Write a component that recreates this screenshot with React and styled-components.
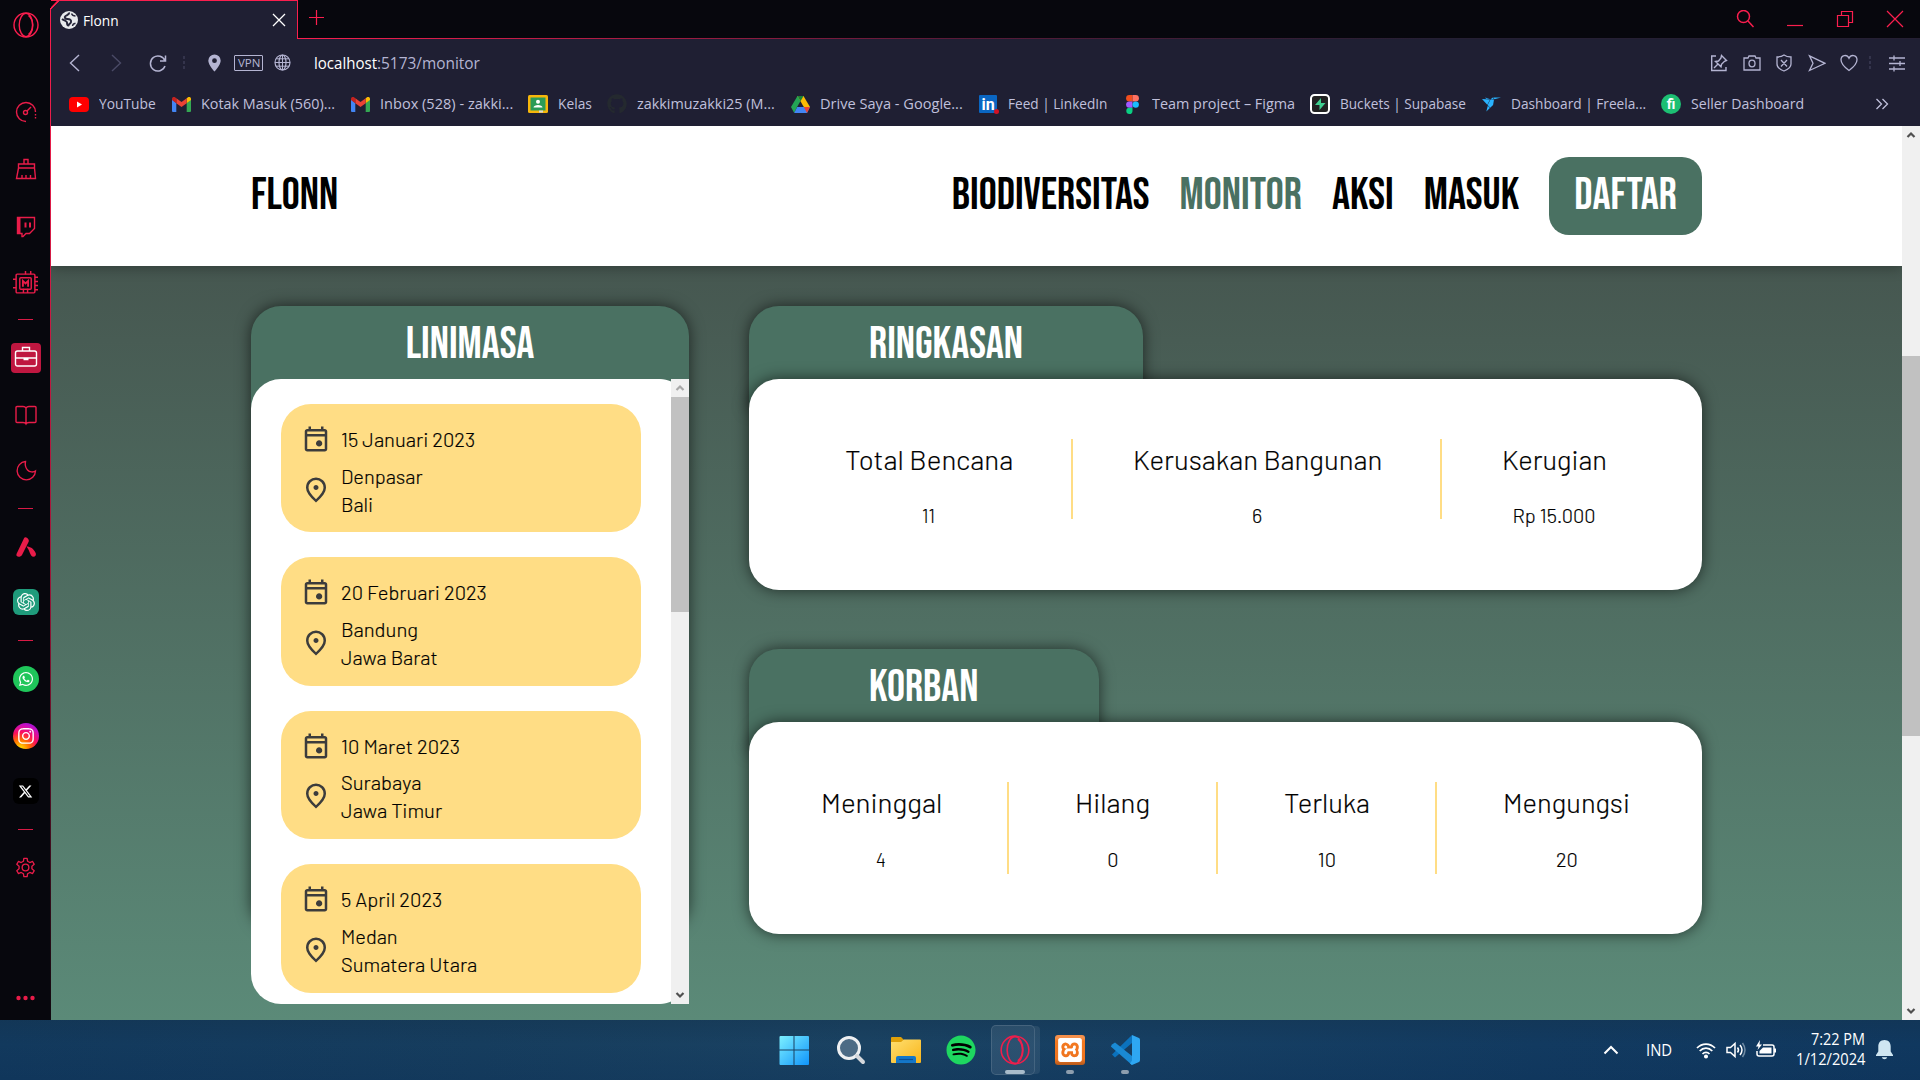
import React, { useLayoutEffect, useRef, useState } from "react";
import styled, { createGlobalStyle } from "styled-components";
import { FaWhatsapp, FaInstagram, FaXTwitter, FaGithub, FaSpotify } from "react-icons/fa6";
import { SiOpenai, SiXampp, SiFreelancer } from "react-icons/si";

const accent = "#fa1e4e";
const chrome = "#1f1f33";
const green = "#4a7162";
const ui = `"Segoe UI", "Open Sans", "Noto Sans", sans-serif`;
const display = `"Bebas Neue", Roboto, sans-serif`;
const body = `Barlow, Roboto, sans-serif`;

const Global = createGlobalStyle`
  * { box-sizing: border-box; }
  body { margin: 0; overflow: hidden; background: #07070d; }
  svg { display: block; flex: none; }
`;

/* Text condensed or widened to a set measure */
const Measure = styled.span`
  display: inline-block;
  flex: none;
  width: ${(p) => p.$w}px;
  white-space: nowrap;
  text-align: left;
`;
const Glyphs = styled.span`
  display: inline-block;
  transform-origin: 0 50%;
`;
function Fit({ w, children }) {
  const ref = useRef(null);
  const [scale, setScale] = useState(1);
  useLayoutEffect(() => {
    setScale(w / ref.current.offsetWidth);
  }, [w]);
  return (
    <Measure $w={w}>
      <Glyphs ref={ref} style={{ transform: `scaleX(${scale})` }}>{children}</Glyphs>
    </Measure>
  );
}

const Desktop = styled.div`
  width: 1920px;
  height: 1080px;
  display: flex;
  flex-direction: column;
  overflow: hidden;
  font-family: ${ui};
`;
const Browser = styled.div`
  height: 1020px;
  display: flex;
  background: #07070d;
`;

/* ---------- sidebar ---------- */
const Side = styled.aside`
  width: 50px;
  flex: none;
  display: flex;
  flex-direction: column;
  padding-left: 1px;
`;
const Edge = styled.div`
  width: 1px;
  flex: none;
  margin-top: 8px;
  background: linear-gradient(${accent}, #a3173a 55%, #4a0f22 80%, #10080f);
`;
const Slot = styled.div`
  height: ${(p) => p.$h || 24}px;
  margin-top: ${(p) => p.$mt}px;
  flex: none;
  display: flex;
  align-items: center;
  justify-content: center;
  color: #e81c49;
`;
const Rule = styled.div`
  width: 15px;
  height: 1px;
  background: #d81a45;
`;
const Badge = styled.div`
  width: ${(p) => p.$s || 26}px;
  height: ${(p) => p.$s || 26}px;
  border-radius: ${(p) => p.$r || "50%"};
  background: ${(p) => p.$bg};
  color: ${(p) => p.$c || "#fff"};
  display: flex;
  align-items: center;
  justify-content: center;
`;

const Line = ({ s = 24, children, w = 1.4, color = "currentColor", vb = 24 }) => (
  <svg width={s} height={s} viewBox={`0 0 ${vb} ${vb}`} fill="none" stroke={color} strokeWidth={w}>{children}</svg>
);
const OperaRing = ({ s = 26, color = accent }) => (
  <Line s={s} vb={26} w={1.4} color={color}>
    <circle cx="13" cy="13" r="12" />
    <ellipse cx="13" cy="13" rx="6.8" ry="11.6" />
    <path d="M15.500 3.500c5.400 4.500 5.400 14.500 0 19" />
  </Line>
);

const Sidebar = () => (
  <Side>
    <Slot $mt={12} $h={26}><OperaRing /></Slot>
    <Slot $mt={62}><Line><path d="M12 21.500a9.500 9.500 0 1 1 9.500-9.500" /><path d="M21.500 14v1.500M21.500 17v1.500" /><circle cx="11.500" cy="12.500" r="2" /><path d="m13 11 4-4" /></Line></Slot>
    <Slot $mt={33}><Line><path d="M10 7V2.500h4V7M4.500 11V7h16v4zM4.500 11 2.500 21.500h19L20.500 11M8 21v-3M12 21v-3M16.500 21v-3" /></Line></Slot>
    <Slot $mt={34}><Line><path d="M3.500 2.500h17v11l-5 5h-3.500L9 21.500H8v-3H3.500z" /><path d="M5 3v15" strokeWidth="3" /><path d="M11.500 7.500v5M16 7.500v5" strokeWidth="2" /></Line></Slot>
    <Slot $mt={32}><Line s={25}><rect x="3" y="3" width="18" height="18" rx="1" /><rect x="6.500" y="6.500" width="11" height="11" rx="1" /><path d="M9.500 15V9.500l2.500 2.500 2.500-2.500V15" strokeWidth="1.800" /><path d="M12 0v3M17 0v3M21 6h3M21 10h3M21 14h3M21 18h3M0 8h3M0 16h3M10 17v4M14 17v4" /></Line></Slot>
    <Slot $mt={23} $h={2}><Rule /></Slot>
    <Slot $mt={22} $h={31}>
      <Badge $s={30} $r="4px" $bg="#bf1740">
        <Line s={24}><path d="M8.500 5V1.500h7V5" /><rect x="1.500" y="5" width="21" height="15" rx="2" /><path d="M1.500 12h21M9.500 13.500h5" /></Line>
      </Badge>
    </Slot>
    <Slot $mt={30}><Line><path d="M12 5v15M12 5c-1-1.500-2-1.500-3-1.500H3A1 1 0 0 0 2 4.500v14a1 1 0 0 0 1 1h6c1.500 0 2.500.5 3 1.500.5-1 1.500-1.500 3-1.500h6a1 1 0 0 0 1-1v-14a1 1 0 0 0-1-1h-6c-1 0-2 0-3 1.500z" /></Line></Slot>
    <Slot $mt={32}><Line><path d="M11.500 2.500a9.200 9.200 0 1 0 10 9.500c-2 1.500-6 1.200-8-1-2.200-2.500-2.500-6-2-8.500z" /></Line></Slot>
    <Slot $mt={24} $h={2}><Rule /></Slot>
    <Slot $mt={26}><svg width="24" height="24" viewBox="0 0 24 24" fill="#e81c49"><path d="M2.500 19 10 3.200C10.700 1.700 13 2 14.500 4.500c.5 1 .4 1.700 0 2.500L8 20c-1.500 2.700-6.600 2.200-5.500-1zM12.500 11.500c4 0 7 2 9.300 6.700.6 1.800-.6 3.500-2.300 3.500-3.500 0-3.500-6-7-10.200z" /></svg></Slot>
    <Slot $mt={30} $h={26}><Badge $r="6px" $bg="#1f9b7b"><SiOpenai size={18} /></Badge></Slot>
    <Slot $mt={24} $h={2}><Rule /></Slot>
    <Slot $mt={25} $h={26}><Badge $bg="#1fc65a"><FaWhatsapp size={16} /></Badge></Slot>
    <Slot $mt={31} $h={26}><Badge $bg="radial-gradient(circle at 28% 100%, #ffd400 5%, #ff6a00 30%, #fb0f5d 52%, #c70fc0 76%, #6a1cf5)"><FaInstagram size={18} /></Badge></Slot>
    <Slot $mt={29} $h={26}><Badge $r="6px" $bg="#000"><FaXTwitter size={15} /></Badge></Slot>
    <Slot $mt={24} $h={2}><Rule /></Slot>
    <Slot $mt={25}><Line s={23}><circle cx="12" cy="12" r="3.500" /><path d="M9.800 5.500 10.300 2.500h3.400l.5 3 2.300 1.300 2.900-1.100 1.700 3-2.400 1.900v2.800l2.400 1.900-1.700 3-2.900-1.100-2.300 1.300-.5 3h-3.400l-.5-3-2.300-1.300-2.900 1.100-1.700-3 2.400-1.900v-2.800L2.900 8.700l1.700-3 2.900 1.100z" strokeLinejoin="round" /></Line></Slot>
    <Slot $mt={116} $h={6}><svg width="20" height="6" fill="#e81c49"><circle cx="2.500" cy="3" r="2.200" /><circle cx="9.500" cy="3" r="2.200" /><circle cx="16.500" cy="3" r="2.200" /></svg></Slot>
  </Side>
);

/* ---------- browser chrome ---------- */
const Main = styled.div`
  flex: 1;
  min-width: 0;
  display: flex;
  flex-direction: column;
`;
const TabBar = styled.div`
  height: 39px;
  flex: none;
  display: flex;
`;
const Tab = styled.div`
  width: 247px;
  height: 39px;
  flex: none;
  display: flex;
  align-items: center;
  padding: 0 11px 0 9px;
  background: linear-gradient(134deg, transparent 4px, ${accent} 4.500px, ${accent} 5.800px, ${chrome} 6.300px);
  border-top: 1px solid ${accent};
  border-right: 1px solid ${accent};
  color: #fff;
  font-size: 14.500px;
  gap: 5px;
`;
const Grow = styled.div`flex: 1;`;
const TabRest = styled.div`
  flex: 1;
  display: flex;
  align-items: flex-start;
  padding: 9px 16px 0 10px;
  border-bottom: 1px solid;
  border-image: linear-gradient(90deg, ${accent}, #5b1a38 40%, #251f33 70%) 1;
  color: ${accent};
`;
const Controls = styled.div`
  display: flex;
  gap: 32px;
  padding-top: 1px;
`;
const Toolbar = styled.div`
  height: 47px;
  flex: none;
  display: flex;
  align-items: center;
  padding: 0 14px 0 16px;
  background: ${chrome};
  color: #b4b4d2;
`;
const Gap = styled.div`width: ${(p) => p.$w}px; flex: none;`;
const Vpn = styled.div`
  width: 29px;
  height: 16px;
  flex: none;
  border: 1px solid #b4b4d2;
  border-radius: 1px;
  font-size: 11.500px;
  line-height: 14px;
  padding-left: 3px;
`;
const Url = styled.div`
  display: flex;
  font-size: 16px;
  line-height: 22px;
`;
const Host = styled.span`color: #fff;`;
const Dots = styled.div`
  width: 2px;
  height: 14px;
  flex: none;
  background: repeating-linear-gradient(#34344c 0 3px, transparent 3px 5px);
`;
const Actions = styled.div`
  display: flex;
  align-items: center;
  gap: 14.500px;
  ${Dots} { margin: 0 2.500px 0 -3.500px; }
`;
const Bookmarks = styled.div`
  height: 40px;
  flex: none;
  display: flex;
  align-items: center;
  gap: 15px;
  padding: 0 31px 4px 18px;
  background: ${chrome};
  color: #c0c0dc;
  font-size: 15px;
`;
const Bookmark = styled.div`
  display: flex;
  align-items: center;
  gap: 10px;
  flex: none;
  line-height: 20px;
`;
const BookmarkText = styled.div`padding-bottom: 2px;`;
const IconBox = styled.div`
  width: 20px;
  height: 24px;
  display: flex;
  align-items: center;
  justify-content: center;
`;
const LinkedIn = styled.div`
  width: 18px;
  height: 18px;
  border-radius: 1px;
  background: #0a66c2;
  color: #fff;
  font: 700 16px/19px Roboto, sans-serif;
  text-align: center;
  position: relative;
  &::after {
    content: "";
    position: absolute;
    right: -2px;
    bottom: -1px;
    width: 5px;
    height: 5px;
    border-radius: 50%;
    background: #d11124;
  }
`;
const Fiverr = styled.div`
  width: 20px;
  height: 20px;
  border-radius: 50%;
  background: #1dbf73;
  color: #fff;
  font: 700 14px/20px Roboto, sans-serif;
  text-align: center;
`;

const Gmail = () => (
  <svg width="19" height="15" viewBox="0 0 19 15">
    <path d="M0 2.500V14q0 1 1 1h3.300V6z" fill="#4285f4" />
    <path d="M14.700 15H18q1 0 1-1V2.500L14.700 6z" fill="#34a853" />
    <path d="M14.700 1.200V6.300L19 3V2c0-2-2-2.400-3.300-1.500z" fill="#fbbc04" />
    <path d="M4.300 6.300V1.200L9.500 5l5.200-3.800v5.100L9.500 10z" fill="#ea4335" />
    <path d="M0 2v1l4.300 3.300V1.200l-1-.7C2 -.4 0 0 0 2z" fill="#c5221f" />
  </svg>
);
const bookmarks = [
  ["YouTube", 57, <svg width="20" height="15"><rect width="20" height="15" rx="4" fill="#f00" /><path d="M8 4.500v6l5-3z" fill="#fff" /></svg>],
  ["Kotak Masuk (560)...", 134, <Gmail />],
  ["Inbox (528) - zakki...", 133, <Gmail />],
  ["Kelas", 34, <svg width="20" height="18"><rect width="20" height="18" rx="1.500" fill="#f6b60b" /><rect x="2.500" y="2.500" width="15" height="13" fill="#2a9b57" /><circle cx="10" cy="6.800" r="2" fill="#fff" /><path d="M5.500 12.500c0-3.500 9-3.500 9 0z" fill="#fff" /><path d="M11 15.500h4v2h-4z" fill="#d8d8d8" /></svg>],
  ["zakkimuzakki25 (M...", 138, <FaGithub size={20} color="#24292f" />],
  ["Drive Saya - Google...", 143, <svg width="19" height="17" viewBox="0 0 19 17"><path d="M6.500 0h6L6.200 10.800 3.200 17 0 11z" fill="#23a455" /><path d="M6.500 0h6L19 11h-6.200z" fill="#fbbc04" /><path d="M6.500 0h6l-3 5.200z" fill="#188038" /><path d="M6.200 11H19l-3 6H3.200z" fill="#4285f4" /><path d="m12.800 11h6.200l-3 6z" fill="#ea4335" /></svg>],
  ["Feed | LinkedIn", 99, <LinkedIn>in</LinkedIn>],
  ["Team project – Figma", 143, <svg width="13" height="19" viewBox="0 0 13 19"><path d="M6.500 0H3.300a3.200 3.200 0 0 0 0 6.400h3.200z" fill="#f24e1e" /><path d="M6.500 0h3.200a3.200 3.200 0 0 1 0 6.400H6.500z" fill="#ff7262" /><path d="M6.500 6.400H3.300a3.200 3.200 0 0 0 0 6.400h3.200z" fill="#a259ff" /><circle cx="9.700" cy="9.600" r="3.200" fill="#1abcfe" /><path d="M6.500 12.800H3.300a3.100 3.100 0 1 0 3.200 3.100z" fill="#0acf83" /></svg>],
  ["Buckets | Supabase", 126, <svg width="20" height="20"><rect x="1" y="1" width="18" height="18" rx="3.500" fill="#222" stroke="#fff" strokeWidth="2" /><path d="M11 4v5h4.500L9.500 16v-5H5z" fill="#3ecf8e" /></svg>],
  ["Dashboard | Freela...", 135, <SiFreelancer size={19} color="#29b2fe" />],
  ["Seller Dashboard", 113, <Fiverr>fi</Fiverr>],
];

const Chrome = () => (
  <>
    <TabBar>
      <Tab>
        <svg width="18" height="18" viewBox="0 0 18 18"><circle cx="9" cy="9" r="9" fill="#e8eaed" /><path d="M9 1.500c.5 2-2 2.500-3.500 3.500S5 8 7.500 8s4 1 3.500 3-2 1.500-2.500 3.500c-1 0-1.500-1.500-1.500-3S4 9.500 2 8" fill="none" stroke="#26263a" strokeWidth="2" strokeLinejoin="round" /><path d="M11.500 2.500c.5 1.500 2 2.500 4 2.500M12.500 15c.2-1.600 1-2.500 3-2.800" fill="none" stroke="#26263a" strokeWidth="1.400" /></svg>
        <Fit w={36}>Flonn</Fit>
        <Grow />
        <Line s={14} vb={14} w={1.300}><path d="m1 1 12 12M13 1 1 13" /></Line>
      </Tab>
      <TabRest>
        <Line s={17} vb={17} w={1.200}><path d="M8.500 1v15M1 8.500h15" /></Line>
        <Grow />
        <Controls>
          <Line s={18} vb={18} w={1.500}><circle cx="7.500" cy="6.500" r="6" /><path d="m12 11 5.500 6" /></Line>
          <Line s={18} vb={18} w={1.200}><path d="M1 15.500h16" /></Line>
          <Line s={18} vb={18} w={1.200}><path d="M1.500 5.500h11v11h-11zM5.500 5.500v-4h11v11h-4" /></Line>
          <Line s={18} vb={18} w={1.200}><path d="m1 1 16 16M17 1 1 17" /></Line>
        </Controls>
      </TabRest>
    </TabBar>
    <Toolbar>
      <Line s={18} vb={18} w={1.400}><path d="m12 1-8.500 8L12 17" /></Line>
      <Gap $w={23} />
      <Line s={18} vb={18} w={1.400} color="#4a4a66"><path d="m4 1 8.500 8L4 17" /></Line>
      <Gap $w={23} />
      <Line s={18} vb={18} w={1.500}><path d="M16 7A7.500 7.500 0 1 0 16 12M16.500 1.500v5.500H11" /></Line>
      <Gap $w={16} />
      <Dots />
      <Gap $w={22} />
      <svg width="15" height="18" viewBox="0 0 15 18"><path d="M7.500.5a6.200 6.200 0 0 0-6.200 6.200c0 4 6.200 10.800 6.200 10.800s6.200-6.800 6.200-10.800A6.200 6.200 0 0 0 7.500.5zm0 3.800a2.400 2.400 0 1 1 0 4.800 2.400 2.400 0 0 1 0-4.800z" fill="#b4b4d2" /></svg>
      <Gap $w={12} />
      <Vpn><Fit w={22}>VPN</Fit></Vpn>
      <Gap $w={11} />
      <Line s={17} vb={17} w={1.200}><circle cx="8.500" cy="8.500" r="7.500" /><ellipse cx="8.500" cy="8.500" rx="3.500" ry="7.500" /><path d="M1 8.500h15M8.500 1v15M2.200 4.800h12.600M2.200 12.200h12.600" strokeWidth="1" /></Line>
      <Gap $w={23} />
      <Url><Host><Fit w={63}>localhost</Fit></Host><Fit w={103}>:5173/monitor</Fit></Url>
      <Grow />
      <Actions>
        <Line s={18} vb={18} w={1.400}><path d="M6 2H1.700v14.500H16V13M11.500 1.500l5 5-2 .8-3 3-.5 2.500L5.500 7.500 8.500 7l2.500-3zM8 10l-4 4" /></Line>
        <Line s={18} vb={18} w={1.300}><path d="M1 4h4l1-2h6l1 2h4v12H1z" /><ellipse cx="9" cy="9.500" rx="3" ry="3.300" /></Line>
        <Line s={18} vb={18} w={1.300}><path d="M9 1c2 1.500 5 2 7 2v7c0 3-3 5.500-7 7-4-1.500-7-4-7-7V3c2 0 5-.5 7-2zM6 6l6 6.500M12 6l-6 6.500" /></Line>
        <Line s={18} vb={18} w={1.300}><path d="M1.500 1.800 17 9.300 1.500 16.500 5 9.300z" /></Line>
        <Line s={18} vb={18} w={1.300}><path d="M9 16.500C3.500 12.500 1 9.500 1 5.800 1 1 7 0 9 4.200 11 0 17 1 17 5.800c0 3.700-2.500 6.700-8 10.700z" /></Line>
        <Dots />
        <Line s={18} vb={18} w={1.300}><path d="M1 4h16M1 9.500h16M1 15h16M6 1.500v5M12 7v5M6 12.500v5" /></Line>
      </Actions>
    </Toolbar>
    <Bookmarks>
      {bookmarks.map(([label, w, icon]) => (
        <Bookmark key={label}><IconBox>{icon}</IconBox><BookmarkText><Fit w={w}>{label}</Fit></BookmarkText></Bookmark>
      ))}
      <Grow />
      <Line s={14} vb={14} w={1.300}><path d="m1.500 2 5 5-5 5M7.500 2l5 5-5 5" /></Line>
    </Bookmarks>
  </>
);

/* ---------- site ---------- */
const View = styled.div`
  flex: 1;
  min-height: 0;
  display: flex;
`;
const Page = styled.div`
  flex: 1;
  display: flex;
  flex-direction: column;
  overflow: hidden;
  background: linear-gradient(#465750 140px, #5b8a78 894px);
`;
const Header = styled.header`
  height: 140px;
  flex: none;
  display: flex;
  align-items: center;
  justify-content: space-between;
  padding: 0 200px;
  background: #fff;
  box-shadow: 0 2px 12px rgba(0, 0, 0, 0.3);
  font: 400 45px/72px ${display};
  color: #000;
`;
const Nav = styled.nav`
  display: flex;
  align-items: center;
  gap: 30px;
`;
const NavLink = styled.div`
  color: ${(p) => (p.$active ? green : "#000")};
`;
const Cta = styled.div`
  height: 78px;
  padding: 3px 25px;
  border-radius: 20px;
  background: ${green};
  color: #fff;
`;
const Content = styled.main`
  display: flex;
  gap: 60px;
  padding: 40px 200px 0;
  align-items: flex-start;
`;
const shadow = "0 0 15px rgba(0, 0, 0, 0.6)";
const Timeline = styled.section`
  width: 438px;
  height: 625px;
  flex: none;
  border-radius: 30px;
  background: ${green};
  box-shadow: ${shadow};
`;
const Title = styled.h2`
  margin: 0;
  height: 73px;
  padding-top: 3px;
  display: flex;
  justify-content: center;
  font: 400 45px/72px ${display};
  color: #fff;
`;
const Scroller = styled.div`
  height: 625px;
  display: flex;
  border-radius: 30px 0 0 30px;
  background:
    linear-gradient(#fff, #fff) 0 0 / 408px 100% no-repeat,
    radial-gradient(circle at 0 30px, #fff 29.500px, transparent 30.500px) 408px 0 / 30px 30px no-repeat,
    radial-gradient(circle at 0 0, #fff 29.500px, transparent 30.500px) 408px 100% / 30px 30px no-repeat,
    linear-gradient(#fff, #fff) 408px 30px / 30px 565px no-repeat;
  overflow: hidden;
`;
const Events = styled.div`
  flex: 1;
  display: flex;
  flex-direction: column;
  gap: 25px;
  padding: 25px 30px 0;
`;
const Event = styled.article`
  height: 128.400px;
  flex: none;
  padding: 20px 20px 0;
  display: flex;
  flex-direction: column;
  gap: 7.500px;
  border-radius: 30px;
  background: #ffdd85;
  font: 300 20px/28px ${body};
  color: #000;
  -webkit-text-stroke: 0.200px #000;
`;
const EventRow = styled.div`
  display: flex;
  align-items: center;
  gap: 10px;
  line-height: ${(p) => (p.$tall ? 28 : 32)}px;
  height: ${(p) => (p.$tall ? 56 : 30)}px;
`;
const Lines = styled.div`
  display: flex;
  flex-direction: column;
`;
const Track = styled.div`
  width: 18px;
  flex: none;
  display: flex;
  flex-direction: column;
  align-items: center;
  background: #f0f0f0;
`;
const Arrow = styled.div`
  height: 18px;
  display: flex;
  align-items: center;
  color: ${(p) => (p.$dim ? "#a8a8a8" : "#505050")};
`;
const Thumb = styled.div`
  width: 18px;
  height: ${(p) => p.$h}px;
  margin-top: ${(p) => p.$mt || 0}px;
  background: #c1c1c1;
`;
const Column = styled.div`
  width: 953px;
  display: flex;
  flex-direction: column;
  gap: 59px;
`;
const Heading = styled(Title)`
  width: max-content;
  height: 103px;
  padding: 3px 120px 0;
  margin-bottom: -30px;
  border-radius: 30px 30px 0 0;
  background: ${green};
  box-shadow: ${shadow};
`;
const Panel = styled.div`
  position: relative;
  height: ${(p) => p.$h}px;
  display: flex;
  justify-content: center;
  align-items: flex-start;
  padding-top: 60px;
  border-radius: 30px;
  background: #fff;
  box-shadow: ${shadow};
  color: #000;
  font-family: ${body};
  font-weight: 300;
  -webkit-text-stroke: 0.200px #000;
`;
const Stat = styled.div`
  height: ${(p) => p.$h}px;
  padding: 0 ${(p) => p.$pad}px;
  display: flex;
  flex-direction: column;
  align-items: center;
  gap: ${(p) => p.$gap}px;
  & + & { border-left: 2px solid #ffdd85; margin-left: -1px; }
`;
const StatLabel = styled.div`
  font-size: 28px;
  line-height: 41px;
`;
const StatValue = styled.div`
  font-size: 20px;
  line-height: 28px;
`;

const CalendarIcon = () => (
  <svg width="30" height="30" viewBox="0 -960 960 960" fill="#3c3c3c"><path d="M580-240q-42 0-71-29t-29-71q0-42 29-71t71-29q42 0 71 29t29 71q0 42-29 71t-71 29ZM200-80q-33 0-56.500-23.500T120-160v-560q0-33 23.500-56.500T200-800h40v-80h80v80h320v-80h80v80h40q33 0 56.500 23.500T840-720v560q0 33-23.500 56.500T760-80H200Zm0-80h560v-400H200v400Zm0-480h560v-80H200v80Z" /></svg>
);
const PlaceIcon = () => (
  <svg width="30" height="30" viewBox="0 -960 960 960" fill="#3c3c3c"><path d="M480-480q33 0 56.500-23.500T560-560q0-33-23.500-56.500T480-640q-33 0-56.500 23.500T400-560q0 33 23.500 56.500T480-480Zm0 294q122-112 181-203.500T720-552q0-109-69.500-178.500T480-800q-101 0-170.500 69.500T240-552q0 71 59 162.500T480-186Zm0 106Q319-217 239.500-334.500T160-552q0-150 96.500-239T480-880q127 0 223.500 89T800-552q0 100-79.500 217.500T480-80Z" /></svg>
);
const Caret = ({ down }) => (
  <Line s={10} vb={10} w={2.200}><path d={down ? "m1.500 3 3.500 3.500L8.500 3" : "M1.500 7 5 3.500 8.500 7"} /></Line>
);

const events = [
  [["15 Januari 2023", 134], ["Denpasar", 82], ["Bali", 32]],
  [["20 Februari 2023", 146], ["Bandung", 77], ["Jawa Barat", 97]],
  [["10 Maret 2023", 119], ["Surabaya", 80], ["Jawa Timur", 101]],
  [["5 April 2023", 101], ["Medan", 57], ["Sumatera Utara", 136]],
];
const summary = [["Total Bencana", 168, "11", 13], ["Kerusakan Bangunan", 249, "6", 10], ["Kerugian", 105, "Rp 15.000", 83]];
const victims = [["Meninggal", 121, "4", 10], ["Hilang", 75, "0", 11], ["Terluka", 86, "10", 18], ["Mengungsi", 127, "20", 22]];

const Stats = ({ title, rows, panel, h, pad, gap }) => (
  <section>
    <Heading>{title}</Heading>
    <Panel $h={panel}>
      {rows.map(([label, lw, value, vw]) => (
        <Stat key={label} $h={h} $pad={pad} $gap={gap}>
          <StatLabel><Fit w={lw}>{label}</Fit></StatLabel>
          <StatValue><Fit w={vw}>{value}</Fit></StatValue>
        </Stat>
      ))}
    </Panel>
  </section>
);

const Site = () => (
  <View>
    <Page>
      <Header>
        <div>FLONN</div>
        <Nav>
          <NavLink>BIODIVERSITAS</NavLink>
          <NavLink $active>MONITOR</NavLink>
          <NavLink>AKSI</NavLink>
          <NavLink>MASUK</NavLink>
          <Cta>DAFTAR</Cta>
        </Nav>
      </Header>
      <Content>
        <Timeline>
          <Title>LINIMASA</Title>
          <Scroller>
            <Events>
              {events.map(([date, city, region]) => (
                <Event key={date[0]}>
                  <EventRow><CalendarIcon /><Fit w={date[1]}>{date[0]}</Fit></EventRow>
                  <EventRow $tall>
                    <PlaceIcon />
                    <Lines><Fit w={city[1]}>{city[0]}</Fit><Fit w={region[1]}>{region[0]}</Fit></Lines>
                  </EventRow>
                </Event>
              ))}
            </Events>
            <Track><Arrow $dim><Caret /></Arrow><Thumb $h={215} /><Grow /><Arrow><Caret down /></Arrow></Track>
          </Scroller>
        </Timeline>
        <Column>
          <Stats title="RINGKASAN" rows={summary} panel={211} h={80} pad={59.500} gap={21} />
          <Stats title="KORBAN" rows={victims} panel={212} h={92} pad={66.300} gap={22} />
        </Column>
      </Content>
    </Page>
    <Track><Arrow><Caret /></Arrow><Thumb $mt={212} $h={380} /><Grow /><Arrow><Caret down /></Arrow></Track>
  </View>
);

/* ---------- taskbar ---------- */
const Taskbar = styled.footer`
  height: 60px;
  flex: none;
  display: flex;
  align-items: center;
  justify-content: space-between;
  padding: 0 27px 0 766px;
  background:
    linear-gradient(180deg, rgba(20, 50, 75, 0.35), transparent 40%, rgba(10, 45, 85, 0.25)),
    linear-gradient(90deg, #12395d, #163d5e 25%, #1a4262 45%, #163f63 60%, #123a60 80%, #10385f);
  color: #fff;
`;
const Apps = styled.div`display: flex;`;
const TaskApp = styled.div`
  width: 55px;
  height: 60px;
  padding-top: 15px;
  padding-left: ${(p) => p.$dx || 0}px;
  display: flex;
  flex-direction: column;
  align-items: center;
  gap: 5px;
`;
const ActiveApp = styled.div`
  width: 44px;
  height: 50px;
  margin: 5px 5px 0 5px;
  padding: 9px 0 0 4px;
  display: flex;
  flex-direction: column;
  align-items: center;
  gap: 5px;
  border-radius: 5px;
  border: 1px solid rgba(255, 255, 255, 0.12);
  background: rgba(255, 255, 255, 0.09);
  box-shadow: 6px 0 0 -1px rgba(255, 255, 255, 0.08);
`;
const Mark = styled.div`
  width: ${(p) => p.$w}px;
  height: 4px;
  border-radius: 2px;
  background: ${(p) => (p.$w > 10 ? "#a9bccb" : "#8d9eae")};
`;
const Xampp = styled.div`
  width: 30px;
  height: 30px;
  display: flex;
  align-items: center;
  justify-content: center;
  border-radius: 3px;
  background: linear-gradient(#f5904b 10%, #f47920 20%, #ef741f 80%, #b55a1c);
  color: #fff;
`;
const SpotifyDisc = styled.div`
  border-radius: 50%;
  background: radial-gradient(#000 60%, transparent 62%);
  color: #1ed760;
`;
const Tray = styled.div`
  display: flex;
  align-items: center;
  font-size: 16px;
`;
const Clock = styled.div`
  display: flex;
  flex-direction: column;
  align-items: flex-end;
  line-height: 20px;
  font-size: 15.500px;
  margin: 0 11px 2px 20px;
`;

const Task = () => (
  <Taskbar>
    <Apps>
      <TaskApp>
        <svg width="30" height="30"><defs><linearGradient id="win" x1="0" y1="0" x2="1" y2="1"><stop offset="0" stopColor="#7df0ff" /><stop offset="1" stopColor="#0f94fb" /></linearGradient></defs><path d="M1.500 1h13v13.500h-14V2q0-1 1-1zM15.500 1H29q1 0 1 1v12.500H15.500zM.5 15.500h14V30h-13q-1 0-1-1zM15.500 15.500H30V29q0 1-1 1H15.500z" fill="url(#win)" /></svg>
      </TaskApp>
      <TaskApp $dx={5}>
        <svg width="30" height="30" fill="none"><circle cx="13" cy="13" r="10.500" fill="#4c6b85" stroke="#eef0f2" strokeWidth="3" /><path d="m21 21 6 6" stroke="#d5d8dc" strokeWidth="4" strokeLinecap="round" /></svg>
      </TaskApp>
      <TaskApp $dx={5}>
        <svg width="30" height="30"><defs><linearGradient id="fold" x1="0" y1="0" x2="1" y2="1"><stop offset="0" stopColor="#ffdf70" /><stop offset="1" stopColor="#f9b51a" /></linearGradient></defs><path d="M0 3q0-1 1-1h9l3 3v5H0z" fill="#e0a008" /><path d="M0 7h10l3-2.500h16q1 0 1 1V27q0 1-1 1H1q-1 0-1-1z" fill="url(#fold)" /><path d="M5 28v-5q0-2 2-2h16q2 0 2 2v5z" fill="#1477c9" /><path d="M8 24.500h14" stroke="#0c4f96" strokeWidth="1.200" /></svg>
      </TaskApp>
      <TaskApp $dx={4}><SpotifyDisc><FaSpotify size={30} /></SpotifyDisc></TaskApp>
      <ActiveApp><OperaRing s={30} color="#ee1f4c" /><Mark $w={20} /></ActiveApp>
      <TaskApp $dx={5}><Xampp><SiXampp size={24} /></Xampp><Mark $w={8} /></TaskApp>
      <TaskApp $dx={4}>
        <svg width="30" height="30" viewBox="0 0 30 30"><path d="M2 19.500 22 0v8L5 22.500z" fill="#0b72bd" /><path d="M2 9.500 5 7.500 22 21v9L.8 11.500z" fill="#1a8ad4" /><path d="m22 0 7 3q1 .6 1 2v20q0 1.400-1 2l-7 3-2-1.500 2-3z" fill="#2ea7f2" /></svg>
        <Mark $w={8} />
      </TaskApp>
    </Apps>
    <Tray>
      <Line s={16} vb={16} w={2}><path d="m1.500 11.500 6.500-6.500 6.500 6.500" /></Line>
      <Gap $w={27} />
      <Fit w={26}>IND</Fit>
      <Gap $w={24} />
      <Line s={20} vb={20} w={1.700}><path d="M1 8c5-5.300 13-5.300 18 0M3.700 11c3.600-3.800 9-3.800 12.600 0M6.500 14c2-2.200 5-2.200 7 0" /><circle cx="10" cy="16.500" r="1.200" fill="#fff" /></Line>
      <Gap $w={10} />
      <Line s={20} vb={20} w={1.500}><path d="M1 7.500h3.500L9 3.500v13l-4.500-4H1z" /><path d="M11.500 7.500q2 2.500 0 5M14 5q4 5 0 10" /><path d="M16.500 3q5 7 0 14" stroke="#6f8aa3" /></Line>
      <Gap $w={10} />
      <Line s={20} vb={20} w={1.500}><path d="M7 5h9q2 0 2 2v7q0 2-2 2H3q-2 0-2-2v-3M19.300 8.500v4" /><path d="M7 7.500h8.500v6H3.500V11z" fill="#fff" stroke="none" /><path d="M4 0 0 6.500h2.500L1.500 10 6 4.500H3.500z" fill="#fff" stroke="none" /></Line>
      <Clock><Fit w={54}>7:22 PM</Fit><Fit w={69}>1/12/2024</Fit></Clock>
      <svg width="17" height="20" viewBox="0 0 17 20" fill="#cfe6f1"><path d="M8.500 0C4.500 0 2.300 2.800 2.300 6.500v5L0 15v1h17v-1l-2.300-3.500v-5C14.700 2.800 12.500 0 8.500 0zM5.800 17.300a2.800 2.800 0 0 0 5.400 0z" /></svg>
    </Tray>
  </Taskbar>
);

export default function App() {
  return (
    <Desktop>
      <Global />
      <Browser>
        <Sidebar />
        <Edge />
        <Main>
          <Chrome />
          <Site />
        </Main>
      </Browser>
      <Task />
    </Desktop>
  );
}
